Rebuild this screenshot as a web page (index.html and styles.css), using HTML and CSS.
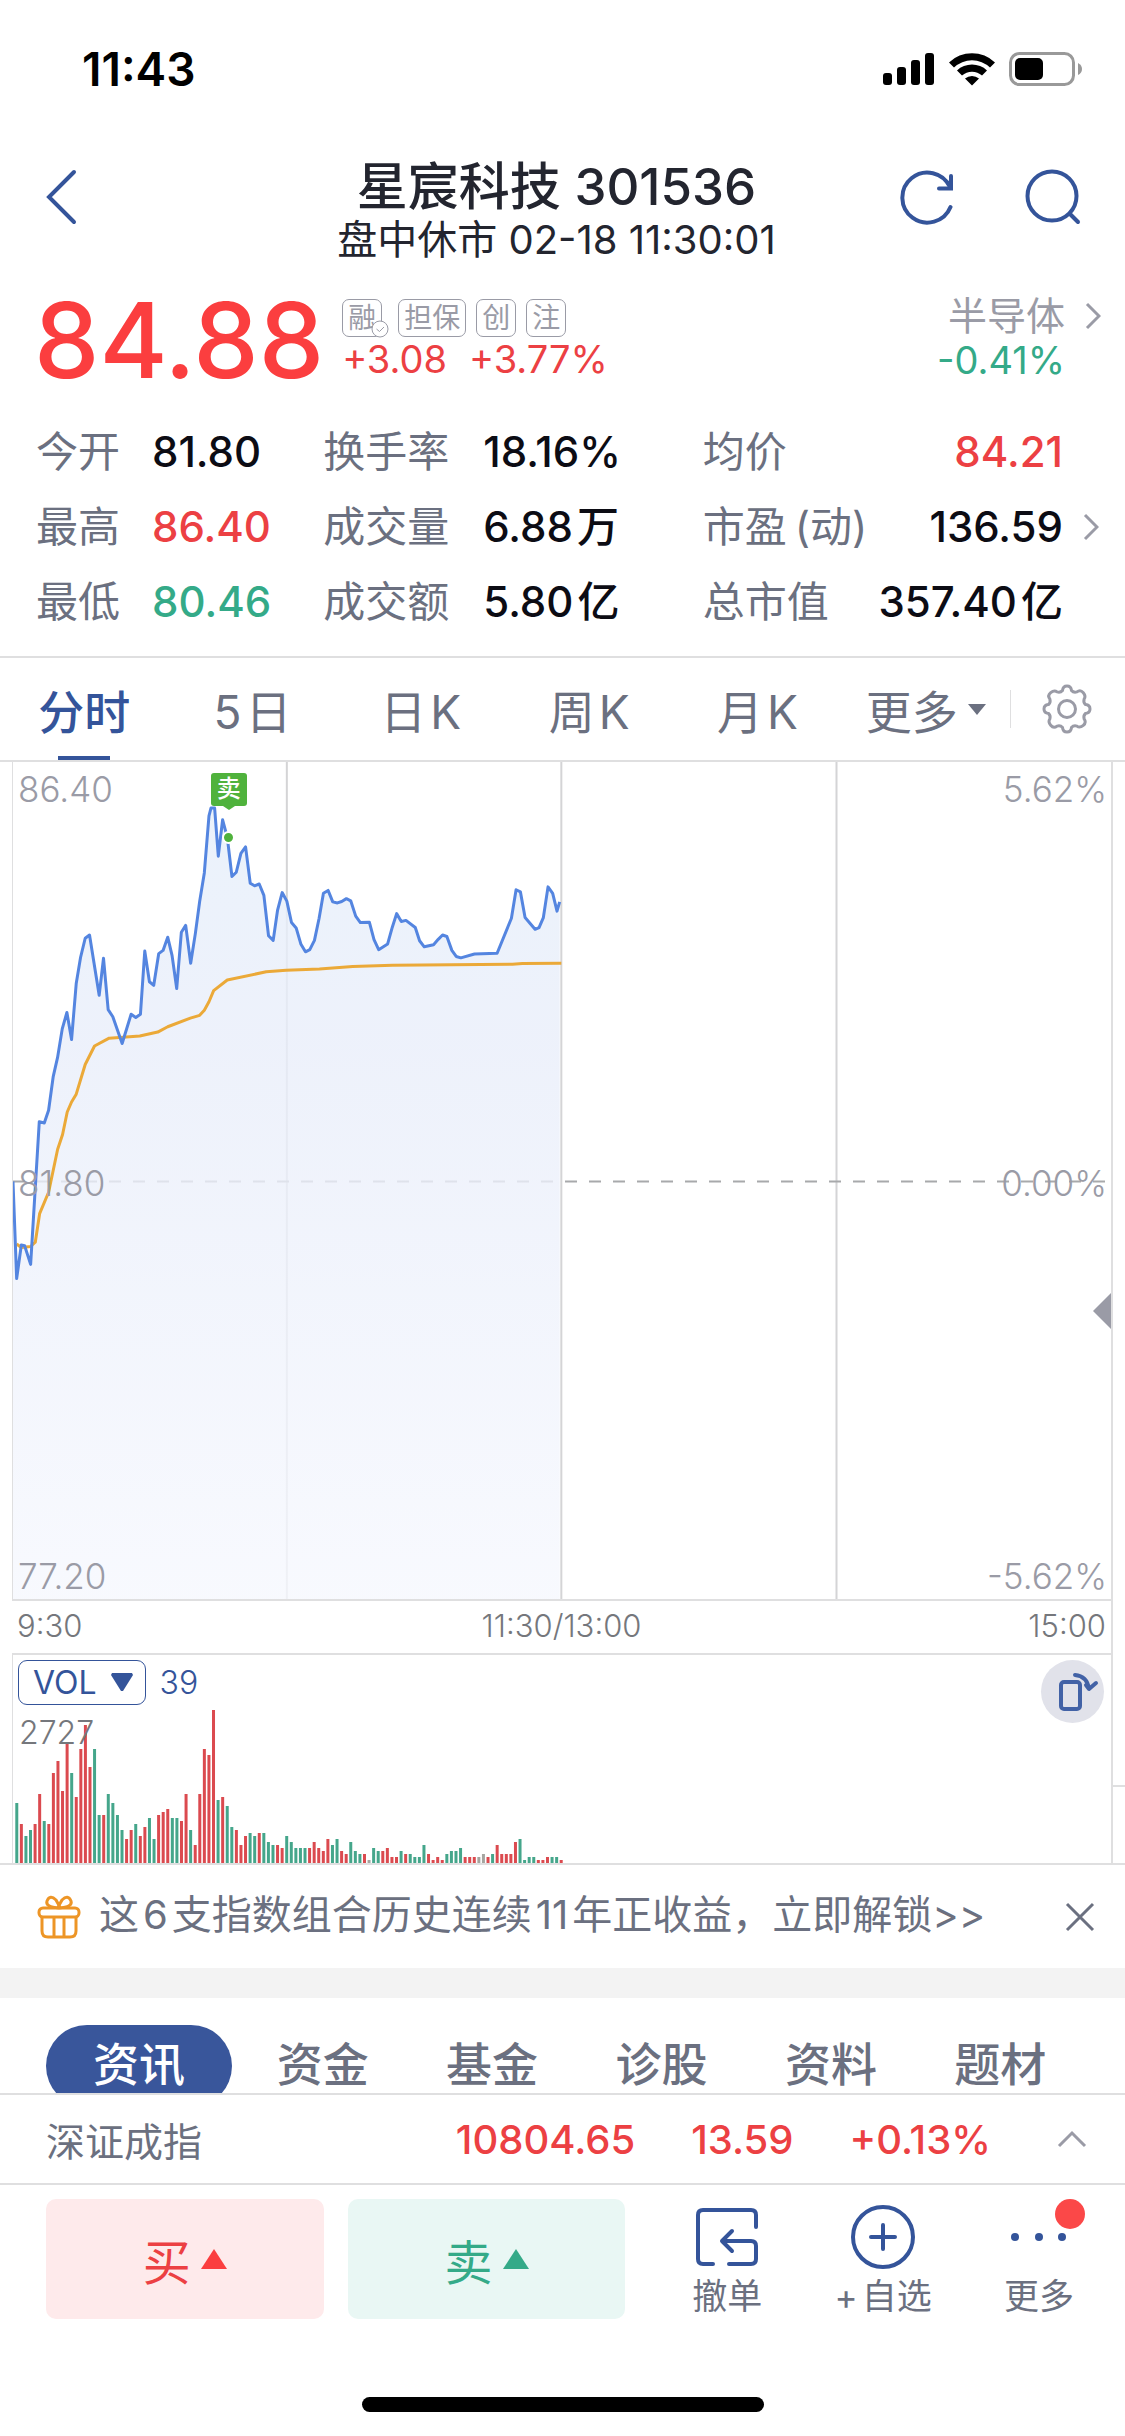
FILE: index.html
```html
<!DOCTYPE html>
<html lang="zh-CN">
<head>
<meta charset="utf-8">
<meta name="viewport" content="width=device-width, initial-scale=1">
<title>星宸科技 301536</title>
<link rel="stylesheet" href="styles.css">
</head>
<body>
<div class="app">
  <div class="status">
    <time>11:43</time>
    <div class="status-icons">
      <svg width="52" height="34" viewBox="0 0 52 34"><rect x="0" y="21" width="9" height="12" rx="3"/><rect x="14" y="15" width="9" height="18" rx="3"/><rect x="28" y="8" width="9" height="25" rx="3"/><rect x="42" y="1" width="9" height="32" rx="3"/></svg>
      <svg width="46" height="34" viewBox="0 0 46 34"><path d="M0 10.500A33 33 0 0 1 46 10.500L41 15.500A26 26 0 0 0 5 15.500ZM8 18.500A22 22 0 0 1 38 18.500L33 23.500A15 15 0 0 0 13 23.500ZM16 26.500A11 11 0 0 1 30 26.500L23 33.500Z"/></svg>
      <svg width="74" height="34" viewBox="0 0 74 34"><rect x="1.500" y="1.500" width="63" height="31" rx="9" fill="none" stroke="#999" stroke-width="3"/><rect x="6" y="6" width="28" height="22" rx="5"/><path d="M69 11q4 2 4 6t-4 6z" fill="#999"/></svg>
    </div>
  </div>

  <header class="header">
    <button class="icon-btn back" aria-label="返回"><svg width="56" height="56" viewBox="0 0 56 56"><path d="M40 3L15 28L40 53"/></svg></button>
    <div class="title">
      <h1>星宸科技 301536</h1>
      <p>盘中休市 02-18 11:30:01</p>
    </div>
    <div class="header-actions">
      <button class="icon-btn" aria-label="刷新"><svg width="56" height="56" viewBox="0 0 56 56"><path d="M51.500 38A25 25 0 1 1 51 18"/><path d="M52 7V19.500H40"/></svg></button>
      <button class="icon-btn" aria-label="搜索"><svg width="56" height="56" viewBox="0 0 56 56"><circle cx="27" cy="27" r="24.500"/><path d="M45 45L53 53"/></svg></button>
    </div>
  </header>

  <main class="content">
    <section class="quote">
      <strong class="price">84.88</strong>
      <div class="quote-mid">
        <div class="tags">
          <span class="tag checked">融<svg class="tick" width="18" height="18" viewBox="0 0 18 18"><circle cx="9" cy="9" r="8"/><path d="M5.500 9L8.500 11.500L13 7"/></svg></span>
          <span class="tag">担保</span><span class="tag">创</span><span class="tag">注</span>
        </div>
        <div class="change"><span>+3.08</span><span>+3.77%</span></div>
      </div>
      <a class="sector" href="#sector">
        <span class="sector-name">半导体</span>
        <svg class="chev" width="16" height="28" viewBox="0 0 16 28"><path d="M2 2L14 14L2 26"/></svg>
        <span class="sector-change">-0.41%</span>
      </a>
    </section>

    <section class="stats">
      <dl>
        <div><dt>今开</dt><dd>81.80</dd></div>
        <div><dt>换手率</dt><dd>18.16%</dd></div>
        <div><dt>均价</dt><dd class="up">84.21</dd></div>
        <div><dt>最高</dt><dd class="up">86.40</dd></div>
        <div><dt>成交量</dt><dd class="unit">6.88<span>万</span></dd></div>
        <div><dt class="unit">市盈<span>(动)</span></dt><dd>136.59</dd></div>
        <div><dt>最低</dt><dd class="down">80.46</dd></div>
        <div><dt>成交额</dt><dd class="unit">5.80<span>亿</span></dd></div>
        <div><dt>总市值</dt><dd class="unit">357.40<span>亿</span></dd></div>
      </dl>
      <button class="stats-more" aria-label="更多指标"><svg class="chev" width="16" height="28" viewBox="0 0 16 28"><path d="M2 2L14 14L2 26"/></svg></button>
    </section>

    <nav class="periods">
      <button class="period active">分时</button>
      <button class="period unit">5<span>日</span></button>
      <button class="period unit">日<span>K</span></button>
      <button class="period unit">周<span>K</span></button>
      <button class="period unit">月<span>K</span></button>
      <button class="period more">更多<svg width="18" height="11" viewBox="0 0 20 12"><path d="M0 0H20L10 12Z"/></svg></button>
      <button class="gear" aria-label="设置"><svg width="50" height="50" viewBox="0 0 50 50"><circle cx="25" cy="25" r="8.500"/><path d="M20.500 6.500Q21 2 25 2T29.500 6.500Q31.500 8.800 34.900 7.900Q38.400 5.200 41.300 8.700T42.100 15.100Q41.200 18.500 43.500 20.500Q48 21 48 25T43.500 29.500Q41.200 31.500 42.100 34.900Q44.800 38.400 41.300 41.300T34.900 42.100Q31.500 41.200 29.500 43.500Q29 48 25 48T20.500 43.500Q18.500 41.200 15.100 42.100Q11.600 44.800 8.700 41.300T7.900 34.900Q8.800 31.500 6.500 29.500Q2 29 2 25T6.500 20.500Q8.800 18.500 7.900 15.100Q5.200 11.600 8.700 8.700T15.100 7.900Q18.500 8.800 20.500 6.500Z"/></svg></button>
    </nav>

    <div class="charts">
      <div class="price-chart">
        <svg class="plot" viewBox="39 34 3300 2346" preserveAspectRatio="none">
          <defs><linearGradient id="area" x1="0" y1="0" x2="0" y2="1"><stop offset="0" stop-color="#e6effa"/><stop offset="0.300" stop-color="#e9eefa"/><stop offset="1" stop-color="#f6f8fe"/></linearGradient></defs>
          <path class="grid" d="M862 34V2380M1687 34V2380M2514 34V2380"/>
          <path class="base" d="M39 1210H3339"/>
          <polygon class="area" points="39,1210 50,1482 64,1388 74,1390 92,1442 118,1042 133,1046 146,1010 160,915 173,862 187,782 201,736 215,812 229,655 242,582 256,528 269,519 298,688 311,584 325,728 339,748 367,823 394,741 408,750 422,741 435,564 449,650 462,660 477,571 490,562 504,525 517,576 531,669 545,511 558,492 573,598 587,515 600,425 614,345 628,185 634,163 645,163 656,298 669,196 683,245 697,355 710,343 724,290 738,272 752,374 765,381 779,376 793,408 807,521 821,534 834,450 848,400 862,424 876,484 890,499 904,544 918,566 931,560 945,534 959,472 972,402 986,394 1000,426 1014,429 1027,425 1041,417 1054,423 1069,466 1083,484 1110,483 1124,532 1138,560 1165,544 1179,497 1192,459 1206,481 1220,478 1248,498 1261,535 1275,552 1303,546 1317,531 1330,519 1343,523 1358,562 1371,579 1385,583 1426,572 1494,570 1537,472 1551,392 1564,398 1578,470 1608,503 1620,498 1633,470 1647,384 1661,402 1674,452 1682,426 1682,2380 39,2380"/>
          <polyline class="avg" points="50,1385 64,1395 92,1392 106,1380 119,1300 146,1240 173,1120 188,1078 202,1015 215,987 229,965 256,882 284,830 328,808 420,802 474,791 504,776 572,752 600,744 614,730 628,706 642,675 683,645 800,622 860,618 960,614 1060,607 1180,604 1540,601 1570,599 1687,598"/>
          <polyline class="line" points="39,1210 50,1482 64,1388 74,1390 92,1442 118,1042 133,1046 146,1010 160,915 173,862 187,782 201,736 215,812 229,655 242,582 256,528 269,519 298,688 311,584 325,728 339,748 367,823 394,741 408,750 422,741 435,564 449,650 462,660 477,571 490,562 504,525 517,576 531,669 545,511 558,492 573,598 587,515 600,425 614,345 628,185 634,163 645,163 656,298 669,196 683,245 697,355 710,343 724,290 738,272 752,374 765,381 779,376 793,408 807,521 821,534 834,450 848,400 862,424 876,484 890,499 904,544 918,566 931,560 945,534 959,472 972,402 986,394 1000,426 1014,429 1027,425 1041,417 1054,423 1069,466 1083,484 1110,483 1124,532 1138,560 1165,544 1179,497 1192,459 1206,481 1220,478 1248,498 1261,535 1275,552 1303,546 1317,531 1330,519 1343,523 1358,562 1371,579 1385,583 1426,572 1494,570 1537,472 1551,392 1564,398 1578,470 1608,503 1620,498 1633,470 1647,384 1661,402 1674,452 1682,426"/>
        </svg>
        <div class="scale"><span>86.40</span><span>81.80</span><span>77.20</span></div>
        <div class="scale right"><span>5.62%</span><span>0.00%</span><span>-5.62%</span></div>
        <span class="sell-flag">卖</span>
        <i class="sell-dot"></i>
        <button class="drawer" aria-label="展开盘口"></button>
      </div>
      <div class="times"><span>9:30</span><span>11:30/13:00</span><span>15:00</span></div>
      <div class="volume">
        <svg class="bars" id="bars" viewBox="0 0 1100 208" preserveAspectRatio="none"></svg>
        <div class="vol-head"><button class="vol-select">VOL<svg width="22" height="19" viewBox="0 0 22 19"><path d="M1 0H21L22 2L12 18H10L0 2Z"/></svg></button><span>39</span></div>
        <span class="vol-max">2727</span>
        <button class="rotate" aria-label="横屏"><svg width="40" height="40" viewBox="0 0 40 40"><rect x="8" y="10" width="19" height="27" rx="3"/><path d="M22 3Q34 4 36 17M43 11L36 17L33 13"/></svg></button>
      </div>
    </div>

    <aside class="promo">
      <svg class="gift" width="44" height="44" viewBox="0 0 44 44"><rect x="2" y="13" width="40" height="9" rx="4"/><path d="M5 22V36Q5 42 11 42H33Q39 42 39 36V22M17 22V42M27 22V42M22 13Q8 12 10 6Q13 -1 19 5Q22 9 22 13Q22 9 25 5Q31 -1 34 6Q36 12 22 13"/></svg>
      <a href="#unlock">这<span>6</span>支指数组合历史连续<span>11</span>年正收益，立即解锁&gt;&gt;</a>
      <button class="close" aria-label="关闭"><svg width="30" height="30" viewBox="0 0 30 30"><path d="M2 2L28 28M28 2L2 28"/></svg></button>
    </aside>

    <nav class="topics">
      <button class="topic active">资讯</button><button class="topic">资金</button><button class="topic">基金</button><button class="topic">诊股</button><button class="topic">资料</button><button class="topic">题材</button>
    </nav>
  </main>

  <footer class="dock">
    <div class="index-row">
      <span class="index-name">深证成指</span>
      <span>10804.65</span><span>13.59</span><span>+0.13%</span>
      <button class="expand" aria-label="展开指数"><svg width="30" height="18" viewBox="0 0 30 18"><path d="M2 16L15 3L28 16"/></svg></button>
    </div>
    <div class="actions">
      <button class="trade buy">买<svg width="26" height="20" viewBox="0 0 26 20"><path d="M13 0L26 20H0Z"/></svg></button>
      <button class="trade sell">卖<svg width="26" height="20" viewBox="0 0 26 20"><path d="M13 0L26 20H0Z"/></svg></button>
      <button class="tool"><svg width="64" height="64" viewBox="0 0 64 64"><path d="M61 22V10Q61 5 56 5H8Q3 5 3 10V54Q3 59 8 59H18M34 59H56Q61 59 61 54V41Q61 36 56 36H28M37 26L27 36L37 46"/></svg>撤单</button>
      <button class="tool"><svg width="64" height="64" viewBox="0 0 64 64"><circle cx="32" cy="32" r="30"/><path d="M32 20V44M20 32H44"/></svg><span class="unit">+<span>自选</span></span></button>
      <button class="tool"><svg width="64" height="64" viewBox="0 0 64 64"><g class="dots"><circle cx="8" cy="32" r="4"/><circle cx="32" cy="32" r="4"/><circle cx="55" cy="32" r="4"/></g></svg><i class="badge"></i>更多</button>
    </div>
    <div class="home"></div>
  </footer>
</div>
<script src="volume.js"></script>
</body>
</html>
```
FILE: volume.js
```js
// One entry per minute since 9:30: r = up, g = down, n = unchanged.
const minutes = "g20 r13 g9 g11 r13 r23 g14 r13 r30 r34 r24 r40 g30 r22 r38 r46 r32 g38 g16 r16 g23 g20 g16 g11 r8 r11 g13 r9 r12 g15 g8 r16 r17 r18 g15 g15 r14 r23 g11 r6 r23 r38 r36 r51 g21 r22 g19 g12 r11 r6 r9 g10 g9 r10 g10 g7 g6 r6 r5 g9 g7 g5 g5 g5 r5 r7 r5 r4 r8 g6 g8 r4 r3 g7 g4 g3 r3 n1 g5 g4 r4 r5 r2 r2 g4 r3 g3 g2 g2 g6 r3 r1 r2 r1 g3 g4 g4 g5 r2 r2 r2 n2 n3 r2 g3 r6 r3 r3 r3 r7 g8 g1 g2 g2 r1 r1 r2 g2 g2 r1".split(" ");
const svg = document.getElementById("bars");
const step = 1100 / 240;
minutes.forEach((m, i) => {
  const height = Number(m.slice(1)) * 3;
  const bar = document.createElementNS("http://www.w3.org/2000/svg", "rect");
  bar.setAttribute("class", "bar-" + m[0]);
  bar.setAttribute("x", (i + 0.5) * step);
  bar.setAttribute("y", 208 - height);
  bar.setAttribute("width", 3);
  bar.setAttribute("height", height);
  svg.appendChild(bar);
});
```
FILE: styles.css
```css
:root {
  --navy: #34549a;
  --red: #ec4043;
  --green: #34aa88;
  --slate: #6b7080;
  --mute: #9a9ba6;
  --rule: #dfdfe0;
}
* { box-sizing: border-box; margin: 0; padding: 0; }
body {
  font-family: Inter, "Noto Sans CJK SC", sans-serif;
  background: #fff;
  color: #0c0c14;
}
button { border: 0; background: none; font: inherit; color: inherit; cursor: pointer; }
a { color: inherit; text-decoration: none; }
svg { display: block; fill: none; flex: none; }
.up { color: var(--red); }
.down { color: var(--green); }
.unit span { margin-left: 4px; }

.app { height: 100vh; display: flex; flex-direction: column; overflow: hidden; }
.content { flex: 1; min-height: 0; overflow: hidden; }

.status {
  height: 138px;
  flex: none;
  display: flex;
  align-items: center;
  justify-content: space-between;
  padding: 0 42px 0 82px;
  color: #000;
  font-size: 46px;
  font-weight: 600;
}
.status-icons { display: flex; gap: 14px; }
.status-icons svg { fill: #000; }

.header {
  flex: none;
  display: grid;
  grid-template-columns: 1fr auto 1fr;
  padding: 18px 46px 0 34px;
}
.icon-btn { width: 56px; height: 56px; }
.icon-btn path, .icon-btn circle { stroke: var(--navy); stroke-width: 4; stroke-linecap: round; }
.header .icon-btn { margin-top: 13px; }
.header-actions { display: flex; justify-content: flex-end; gap: 70px; margin-right: -2px; }
.title { text-align: center; color: #23252f; }
.title h1 { font-size: 51px; font-weight: 500; line-height: 62px; }
.title p { font-size: 40px; line-height: 44px; }

.quote { display: flex; padding: 28px 24px 0 34px; }
.price { color: #fb3e3f; font-size: 104px; font-weight: 500; line-height: 100px; }
.quote-mid { margin-left: 18px; }
.tags { display: flex; gap: 10px; padding-top: 9px; }
.tag {
  position: relative;
  height: 38px;
  padding: 0 5px;
  border: 1px solid var(--mute);
  border-radius: 7px;
  color: var(--mute);
  font-size: 28px;
  line-height: 36px;
}
.tag.checked { margin-right: 6px; }
.tick { position: absolute; right: -8px; bottom: -2px; fill: #fff; stroke: var(--mute); }
.change { display: flex; gap: 22px; color: var(--red); font-size: 38px; line-height: 44px; }
.sector {
  margin-left: auto;
  display: grid;
  grid-template-columns: auto 16px;
  align-items: center;
  align-content: start;
  justify-items: end;
  column-gap: 20px;
  padding-top: 3px;
  font-size: 39px;
  line-height: 45px;
}
.sector-name { color: var(--mute); }
.sector-change { color: var(--green); font-size: 38px; }
.chev path { stroke: var(--mute); stroke-width: 3; }

.stats { display: flex; align-items: center; padding: 24px 0 17px 36px; border-bottom: 2px solid var(--rule); }
.stats dl { flex: 1; display: grid; grid-template-columns: 287fr 379fr 360fr; }
.stats dl div { display: flex; line-height: 75px; white-space: nowrap; }
.stats dt { width: 160px; color: var(--slate); font-size: 42px; }
.stats dt.unit span { margin-left: 8px; }
.stats dd { font-size: 42px; font-weight: 500; }
.stats div:nth-child(3n+1) dt { width: 116px; }
.stats div:nth-child(3n) dd { margin-left: auto; }
.stats-more { width: 62px; padding-left: 20px; }

.periods { display: flex; height: 104px; border-bottom: 2px solid var(--rule); color: var(--slate); font-size: 46px; }
.period { flex: 1; position: relative; white-space: nowrap; }
.period.active { color: var(--navy); font-weight: 500; }
.period.active::after {
  content: "";
  position: absolute;
  left: 50%;
  bottom: 0;
  width: 52px;
  height: 4px;
  margin-left: -26px;
  background: var(--navy);
}
.period.more { display: flex; align-items: center; justify-content: center; gap: 10px; }
.period.more svg { fill: var(--slate); }
.gear { width: 115px; display: flex; align-items: center; justify-content: center; position: relative; }
.gear::before { content: ""; position: absolute; left: 0; top: 32px; height: 38px; border-left: 1px solid var(--rule); }
.gear svg { stroke: var(--mute); stroke-width: 3; }

.charts { padding: 0 12px; border-bottom: 2px solid var(--rule); }
.price-chart, .volume { position: relative; border: 1px solid var(--rule); border-width: 0 2px 2px 1px; }
.price-chart { height: 839px; }
.plot { width: 100%; height: 100%; }
.plot * { vector-effect: non-scaling-stroke; }
.grid { stroke: #d4d4d6; stroke-width: 2; }
.base { stroke: #a8a9ab; stroke-width: 2; stroke-dasharray: 12 12; }
.area { fill: url(#area); fill-opacity: 0.8; }
.avg { stroke: #eba938; stroke-width: 3; stroke-linejoin: round; }
.line { stroke: #5485e0; stroke-width: 3; stroke-linejoin: round; }
.scale {
  position: absolute;
  inset: 5px 4px 1px 5px;
  display: flex;
  flex-direction: column;
  justify-content: space-between;
  color: var(--mute);
  font-size: 35px;
  font-weight: 300;
  line-height: 44px;
}
.scale.right { align-items: flex-end; }
.sell-flag {
  position: absolute;
  left: 18%;
  top: 11px;
  width: 36px;
  height: 33px;
  border-radius: 3px;
  background: #4fb23c;
  color: #fff;
  font-size: 24px;
  font-weight: 500;
  line-height: 32px;
  text-align: center;
}
.sell-flag::after {
  content: "";
  position: absolute;
  left: 12px;
  top: 33px;
  border: 6px solid transparent;
  border-top: 4px solid #4fb23c;
  border-bottom: 0;
}
.sell-dot {
  position: absolute;
  left: 19%;
  top: 69px;
  width: 13px;
  height: 13px;
  border: 2px solid #fff;
  border-radius: 50%;
  background: #4fb23c;
}
.drawer {
  position: absolute;
  right: 0;
  top: 531px;
  width: 18px;
  height: 36px;
  background: var(--mute);
  clip-path: polygon(0 50%, 100% 0, 100% 100%);
}
.times {
  display: grid;
  grid-template-columns: 1fr auto 1fr;
  height: 54px;
  padding: 0 5px;
  border-right: 2px solid var(--rule);
  border-bottom: 2px solid var(--rule);
  color: #75777c;
  font-size: 31px;
  font-weight: 300;
  line-height: 50px;
}
.times span:last-child { text-align: right; }
.volume { height: 208px; border-bottom: 0; }
.volume::after { content: ""; position: absolute; right: -14px; top: 130px; width: 12px; border-top: 2px solid var(--rule); }
.bars { position: absolute; inset: 0; width: 100%; height: 100%; }
.bar-r { fill: #db4a4f; }
.bar-g { fill: #45a68b; }
.bar-n { fill: #a5a5a0; }
.vol-head { position: relative; display: flex; align-items: center; gap: 14px; padding: 5px; color: var(--navy); font-size: 32px; font-weight: 300; }
.vol-select {
  display: flex;
  align-items: center;
  gap: 14px;
  height: 45px;
  padding: 0 12px 0 14px;
  border: 1px solid var(--navy);
  border-radius: 9px;
  font-weight: 400;
}
.vol-select svg { fill: var(--navy); }
.vol-max { position: absolute; left: 6px; top: 56px; color: #75777c; font-size: 32px; font-weight: 300; line-height: 44px; }
.rotate {
  position: absolute;
  right: 7px;
  top: 5px;
  width: 63px;
  height: 63px;
  display: grid;
  place-items: center;
  border-radius: 50%;
  background: #e1e2ea;
}
.rotate svg { overflow: visible; stroke: #4262a6; stroke-width: 4; stroke-linecap: round; stroke-linejoin: round; }

.promo { display: flex; align-items: center; height: 103px; padding: 0 30px 0 37px; color: var(--slate); }
.gift { stroke: #ed9526; stroke-width: 3; }
.promo a { margin-left: 18px; padding-bottom: 4px; font-size: 40px; line-height: 48px; white-space: nowrap; }
.promo a span { margin: 0 4px; }
.close { margin-left: auto; }
.close svg { stroke: var(--slate); stroke-width: 3; }

.topics { display: flex; padding: 27px 40px 0 46px; border-top: 30px solid #f3f3f3; color: var(--slate); font-size: 46px; font-weight: 500; line-height: 46px; }
.topic { flex: 1; height: 82px; padding-bottom: 5px; }
.topic.active { flex: none; width: 186px; margin-right: 6px; border-radius: 41px; background: #39569b; color: #fff; }

.dock { flex: none; background: #fff; border-top: 2px solid var(--rule); }
.index-row { display: flex; align-items: center; height: 90px; gap: 56px; padding: 0 38px 0 46px; border-bottom: 2px solid var(--rule); color: var(--red); font-size: 40px; font-weight: 500; }
.index-name { margin-right: auto; color: var(--slate); font-size: 39px; font-weight: 400; }
.expand { margin-left: 10px; }
.expand svg { stroke: var(--mute); stroke-width: 3; }
.actions {
  display: grid;
  grid-template-columns: 302fr 302fr 156fr 156fr 156fr;
  padding: 14px 8px 0 46px;
}
.trade { display: flex; align-items: center; justify-content: center; gap: 10px; height: 120px; margin-right: 24px; border-radius: 10px; font-size: 48px; }
.buy { background: #feeaeb; color: var(--red); }
.buy svg { fill: #fb3e3f; }
.sell { background: #e9f7f4; color: var(--green); }
.sell svg { fill: var(--green); }
.tool { position: relative; display: flex; flex-direction: column; align-items: center; padding-top: 6px; color: var(--slate); font-size: 35px; line-height: 54px; }
.tool svg { stroke: var(--navy); stroke-width: 4; stroke-linecap: round; stroke-linejoin: round; }
.dots { fill: var(--navy); stroke: none; }
.badge { position: absolute; left: 50%; top: 0; width: 30px; height: 30px; margin-left: 16px; border-radius: 50%; background: #fb4848; }
.home { width: 402px; height: 15px; margin: 74px auto 24px; border-radius: 8px; background: #000; }
```
